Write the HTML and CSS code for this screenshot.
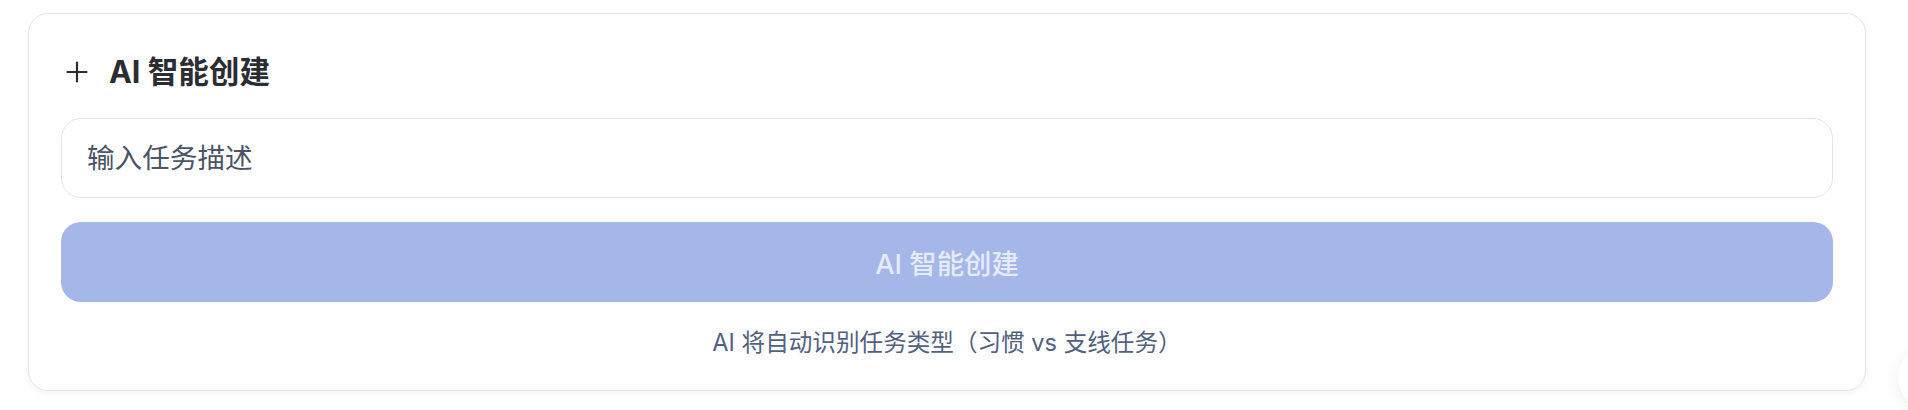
FILE: index.html
```html
<!DOCTYPE html>
<html lang="zh-CN">
<head>
<meta charset="utf-8">
<title>AI 智能创建</title>
<link rel="stylesheet" href="styles.css">
</head>
<body>
<div class="page">
  <section class="card">
    <header class="card-header">
      <svg class="plus-icon" viewBox="0 0 32 32" width="32" height="32" aria-hidden="true">
        <path d="M16 6.5v19M6.5 16h19" fill="none" stroke="#2b2d33" stroke-width="2.2" stroke-linecap="round"/>
      </svg>
      <h2 class="card-title">AI 智能创建</h2>
    </header>
    <input class="task-input" type="text" placeholder="输入任务描述">
    <button class="create-btn" type="button" disabled>AI 智能创建</button>
    <p class="hint">AI 将自动识别任务类型（习惯 vs 支线任务）</p>
  </section>
</div>
<button class="fab" type="button" aria-label="more"></button>
</body>
</html>
```

FILE: styles.css
```css
* { box-sizing: border-box; }

html, body {
  margin: 0;
  padding: 0;
  background: #ffffff;
  font-family: "Inter", "Noto Sans CJK SC", sans-serif;
  overflow: hidden;
}

.page {
  padding: 13px 42px 19px 28px;
}

.card {
  display: flex;
  flex-direction: column;
  border: 1px solid #e3e6ef;
  border-radius: 20px;
  background: #fff;
  padding: 32px 32px 31px 32px;
  box-shadow: 0 2px 6px rgba(30, 40, 80, 0.05);
}

.card-header {
  display: flex;
  align-items: center;
  height: 52px;
  gap: 16px;
}

.plus-icon {
  flex: none;
}

.card-title {
  margin: 0;
  font-size: 30.6px;
  font-weight: 700;
  color: #2b2d33;
  line-height: 52px;
}

.task-input {
  margin-top: 20px;
  height: 80px;
  width: 100%;
  border: 1px solid #e2e6ee;
  border-radius: 20px;
  padding: 0 25px;
  font-family: inherit;
  font-size: 27.6px;
  color: #2b2d33;
  background: #fff;
  outline: none;
}

.task-input::placeholder {
  color: #4a5468;
  opacity: 1;
}

.create-btn {
  margin-top: 24px;
  height: 80px;
  width: 100%;
  border: none;
  border-radius: 20px;
  background: #a5b6e9;
  color: #e6ebf9;
  font-family: inherit;
  font-size: 27.4px;
  font-weight: 500;
}

.hint {
  margin: 25px 0 0 0;
  line-height: 32px;
  text-align: center;
  font-size: 23.6px;
  color: #51617f;
}

.fab {
  position: fixed;
  left: 1898px;
  top: 343px;
  width: 68px;
  height: 68px;
  border-radius: 50%;
  border: none;
  background: #fff;
  box-shadow: 0 4px 16px rgba(20, 30, 60, 0.08);
}
```
